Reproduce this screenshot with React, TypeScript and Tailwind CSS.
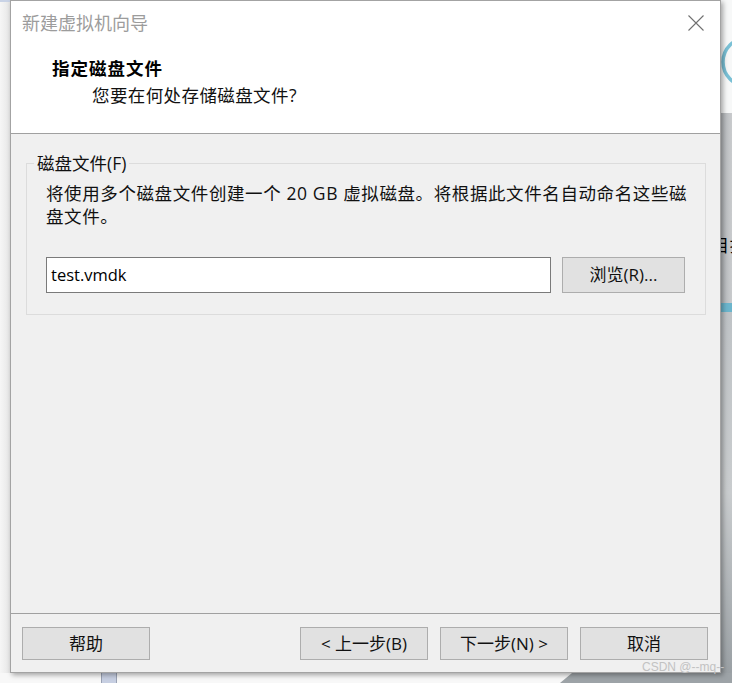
import type { FC, ReactNode } from "react";

const CJK = "font-['Open_Sans','Noto_Sans_CJK_SC',sans-serif]";

const WinButton: FC<{ children: ReactNode; size?: string }> = ({
  children,
  size = "h-[33px] w-[128px]",
}) => (
  <button
    type="button"
    className={`${size} border border-[#adadad] bg-[#e1e1e1] text-[17px] leading-[20px] text-[#111] flex items-center justify-center`}
  >
    {children}
  </button>
);

const RightStrip: FC = () => (
  <div className="w-[11px] flex flex-col bg-[#bfc2c5]">
    <div className="h-[113px] bg-[#f7f8f8] relative overflow-hidden">
      <svg width="11" height="113" className="absolute left-0 top-0">
        <circle cx="26" cy="62" r="24" fill="none" stroke="#79c0d5" strokeWidth="3.5" />
      </svg>
    </div>
    <div className="h-[190px] bg-gradient-to-r from-[#b4b7ba] to-[#c9cbcd] flex items-end pb-[46px] overflow-hidden">
      <span className={`${CJK} text-[17px] leading-[22px] text-black whitespace-nowrap -ml-[9px]`}>
        目扌
      </span>
    </div>
    <div className="h-[9px] bg-[#6cb5cc]" />
    <div className="flex-1 bg-gradient-to-b from-[#bfc3c6] via-[#c9ccce] to-[#9aa0a4]" />
  </div>
);

const App: FC = () => {
  return (
    <div className={`w-[732px] h-[683px] bg-white flex flex-col overflow-hidden relative ${CJK}`}>
      <div className="flex h-[673px]">
        <div className="w-[10px] bg-gradient-to-r from-[#f6f6f6] to-[#e6e6e6] border-t-2 border-[#c9d3e6]" />

        <div className="w-[711px] flex flex-col bg-[#f0f0f0] border border-[#a3a3a3] shadow-[2px_2px_5px_rgba(0,0,0,0.35)] z-10">
          {/* header */}
          <div className="h-[133px] bg-white border-b border-[#a0a0a0] flex flex-col">
            <div className="flex items-start justify-between pl-[11px] pr-[16px] pt-[12px]">
              <span className="text-[18px] leading-[20px] text-[#9c9c9c]">新建虚拟机向导</span>
              <svg width="16" height="16" viewBox="0 0 16 16" className="mt-[2px]">
                <path d="M0.5 0.5 L15.5 15.5 M15.5 0.5 L0.5 15.5" stroke="#707070" strokeWidth="1.1" />
              </svg>
            </div>
            <div className="pl-[41px] pt-[25px] text-[17.5px] leading-[20px] font-bold tracking-[1px] text-black">
              指定磁盘文件
            </div>
            <div className="pl-[81px] pt-[7px] text-[17.5px] leading-[20px] tracking-[0.4px] text-[#111]">
              您要在何处存储磁盘文件?
            </div>
          </div>

          {/* body */}
          <div className="flex-1 pl-[15px] pr-[14px] pt-[29px]">
            <div className="relative border border-[#dcdcdc] pl-[19px] pr-[14px] pt-[18px] pb-[21px]">
              <span className="absolute -top-[11px] left-[7px] px-[3px] bg-[#f0f0f0] text-[17.5px] leading-[20px] text-[#111]">
                磁盘文件(F)
              </span>
              <div className="text-[17.5px] leading-[23px] tracking-[0.6px] text-[#111] whitespace-nowrap">
                <div>将使用多个磁盘文件创建一个 20 GB 虚拟磁盘。将根据此文件名自动命名这些磁</div>
                <div>盘文件。</div>
              </div>
              <div className="flex items-center gap-[11px] mt-[29px]">
                <div className="w-[505px] h-[36px] border border-[#7a7a7a] bg-white flex items-center pl-[4px] text-[16.5px] text-black">
                  test.vmdk
                </div>
                <WinButton size="h-[36px] w-[123px]">浏览(R)...</WinButton>
              </div>
            </div>
          </div>

          {/* footer */}
          <div className="h-[59px] border-t border-[#a0a0a0] flex items-start pt-[13px] pl-[11px] pr-[12px]">
            <WinButton>帮助</WinButton>
            <div className="flex-1" />
            <div className="flex gap-[12px]">
              <WinButton>&lt; 上一步(B)</WinButton>
              <WinButton>下一步(N) &gt;</WinButton>
              <WinButton>取消</WinButton>
            </div>
          </div>
        </div>

        <RightStrip />
      </div>

      {/* desktop below the dialog */}
      <div className="flex-1 relative bg-[#f8f8f8]">
        <div className="absolute left-[101px] top-0 w-[16px] h-[10px] border-x border-[#9aa2b4] bg-[#c7cfe2]" />
        <div className="absolute left-[560px] right-0 top-0 bottom-0 bg-[#9da3a7] [clip-path:polygon(12px_0,100%_0,100%_100%,0_100%)]" />
      </div>

      <span className="absolute left-[642px] top-[660px] z-20 font-['Liberation_Sans',sans-serif] text-[12px] leading-[14px] text-[#c2c2c2]">
        CSDN @--mq--
      </span>
    </div>
  );
};

export default App;
